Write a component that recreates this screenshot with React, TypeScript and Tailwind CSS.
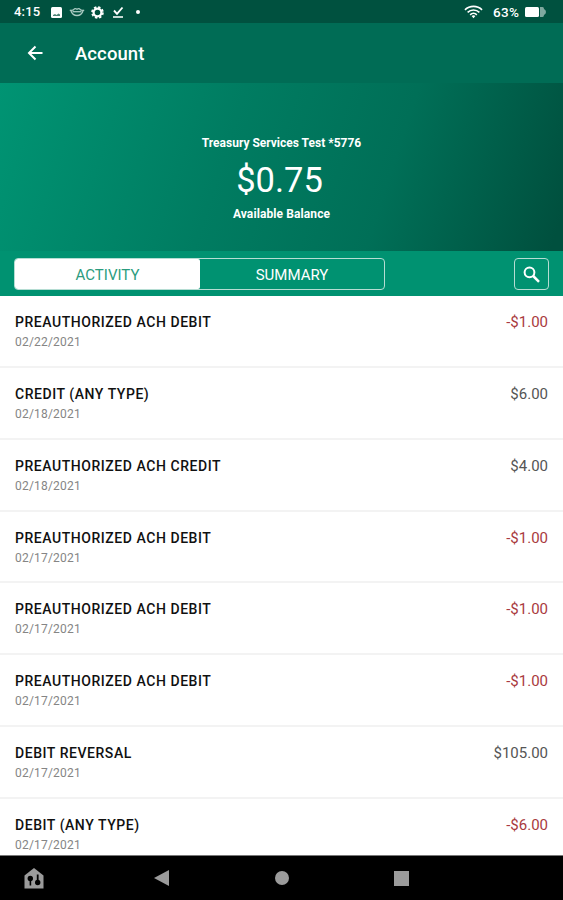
import { clsx } from "clsx";

type Transaction = {
  id: number;
  title: string;
  date: string;
  amount: string;
};

const transactions: Transaction[] = [
  { id: 1, title: "PREAUTHORIZED ACH DEBIT", date: "02/22/2021", amount: "-$1.00" },
  { id: 2, title: "CREDIT (ANY TYPE)", date: "02/18/2021", amount: "$6.00" },
  { id: 3, title: "PREAUTHORIZED ACH CREDIT", date: "02/18/2021", amount: "$4.00" },
  { id: 4, title: "PREAUTHORIZED ACH DEBIT", date: "02/17/2021", amount: "-$1.00" },
  { id: 5, title: "PREAUTHORIZED ACH DEBIT", date: "02/17/2021", amount: "-$1.00" },
  { id: 6, title: "PREAUTHORIZED ACH DEBIT", date: "02/17/2021", amount: "-$1.00" },
  { id: 7, title: "DEBIT REVERSAL", date: "02/17/2021", amount: "$105.00" },
  { id: 8, title: "DEBIT (ANY TYPE)", date: "02/17/2021", amount: "-$6.00" },
];

function StatusBar() {
  return (
    <div className="flex h-[23px] shrink-0 items-center bg-[#00513f] pt-px pr-[17px] pl-[14px] text-white">
      <span className="w-[27px] text-[13px] font-medium tracking-[0.2px] whitespace-nowrap">4:15</span>
      <svg viewBox="0 0 11 11" className="ml-[10px] size-[11px]">
        <rect width="11" height="11" rx="1.5" fill="white" />
        <path d="M2 9V8L4 7L5.500 8L7.500 6.500L9 7.500V9Z" fill="#4d8577" />
      </svg>
      <svg viewBox="0 0 16 10" className="ml-[7px] h-[10px] w-[16px]" fill="none" stroke="#a9cbc2" strokeWidth="1.3">
        <path d="M.8 3.2C3 3.800 4.500 3 5.500 1.800Q6.800 1.400 8 2.300Q9.200 1.400 10.500 1.800C11.500 3 13 3.800 15.200 3.200" />
        <path d="M2 4C3 7 5.500 8.500 8 8.500S13 7 14 4" />
        <path d="M3.500 4.700H12.500" />
      </svg>
      <svg viewBox="0 0 14 14" className="ml-[6px] size-[13px]" fill="none" stroke="white">
        <circle cx="7" cy="7" r="4.200" strokeWidth="2.400" />
        <circle cx="7" cy="7" r="5.900" strokeWidth="1.800" strokeDasharray="2.600 2.034" />
      </svg>
      <svg viewBox="0 0 12 13" className="ml-[8px] h-[13px] w-[12px]" fill="none" stroke="white">
        <path d="M2 4.500L5 7.800L10.500 1.500" strokeWidth="1.900" />
        <path d="M1 11H11" strokeWidth="1.900" stroke="#cfe0dc" />
      </svg>
      <span className="ml-[12px] size-[4px] rounded-full bg-white" />

      <svg viewBox="0 0 20 14" className="ml-auto h-[14px] w-[19px]" fill="none" stroke="white" strokeWidth="1.700">
        <path d="M1 4.700C6-.200 14-.200 19 4.700" />
        <path d="M3.800 7.400C7.300 4 12.700 4 16.200 7.400" />
        <path d="M6.500 10C8.500 8 11.500 8 13.500 10" />
        <path d="M8 11.200Q10 9.500 12 11.200L10 13.500Z" fill="white" stroke="none" />
      </svg>
      <span className="ml-[10px] w-[28px] text-[13.500px] font-medium tracking-[0.3px] whitespace-nowrap">63%</span>
      <svg viewBox="0 0 21 12" className="ml-[4px] h-[12px] w-[21px]">
        <rect x="0" y="1" width="14" height="10" rx="1.500" fill="white" />
        <path d="M15 1H17.500Q19 1 19 3Q21 4 21 6T19 9Q19 11 17.500 11H15Z" fill="#7fa89f" />
      </svg>
    </div>
  );
}

function AppBar() {
  return (
    <header className="flex h-[60px] shrink-0 items-center bg-[#006c55] pl-[27px] text-white">
      <button type="button" aria-label="Back">
        <svg viewBox="0 0 16 16" className="size-[16px]" fill="none" stroke="currentColor" strokeWidth="2">
          <path d="M15.500 8H2.500M8.500 1.500L2 8L8.500 14.500" />
        </svg>
      </button>
      <h1 className="ml-[32px] pt-[3px] text-[18.5px] font-medium tracking-[0.1px]">Account</h1>
    </header>
  );
}

function Balance() {
  return (
    <section className="flex h-[168px] shrink-0 flex-col items-center bg-[linear-gradient(108deg,#009473_0%,#007c61_40%,#006f57_68%,#00503e_98%)] pt-[52px] text-white">
      <p className="text-[12px] leading-[16px] font-bold">Treasury Services Test *5776</p>
      <p className="mt-[9px] mr-[4px] text-[34.5px] leading-[40px]">$0.75</p>
      <p className="mt-[6px] text-[12px] leading-[16px] font-bold tracking-[0.1px]">Available Balance</p>
    </section>
  );
}

function Tabs() {
  return (
    <div className="flex h-[45px] shrink-0 items-center justify-between bg-[#009271] pt-px pr-[14px] pl-[14px] text-white">
      <div className="flex h-[32px] w-[371px] overflow-hidden rounded-[4px] border border-[#b5ddd3] text-[15px]">
        <button type="button" className="w-[185px] rounded-r-[2px] bg-white pt-[2px] text-[#2b9c7e]">
          ACTIVITY
        </button>
        <button type="button" className="flex-1 pt-[2px]">
          SUMMARY
        </button>
      </div>
      <button
        type="button"
        aria-label="Search"
        className="flex h-[32px] w-[35px] items-center justify-center rounded-[4px] border border-[#b5ddd3]"
      >
        <svg viewBox="0 0 17 17" className="size-[17px]" fill="none" stroke="currentColor">
          <circle cx="6.500" cy="6.300" r="4.900" strokeWidth="2" />
          <path d="M10.200 10L16 15.800" strokeWidth="2.500" />
        </svg>
      </button>
    </div>
  );
}

function TransactionRow({ item }: { item: Transaction }) {
  return (
    <li className="flex h-[71.75px] shrink-0 justify-between border-b-2 border-[#f3f3f3] px-[15px] pt-[16px]">
      <div>
        <p className="text-[14px] leading-[20px] font-medium tracking-[0.55px] text-[#111]">{item.title}</p>
        <p className="text-[12px] leading-[20px] tracking-[0.2px] text-[#858585]">{item.date}</p>
      </div>
      <p
        className={clsx(
          "text-[15px] leading-[20px]",
          item.amount.startsWith("-") ? "text-[#a93a40]" : "text-[#555]",
        )}
      >
        {item.amount}
      </p>
    </li>
  );
}

function NavBar() {
  return (
    <nav className="flex h-[45px] shrink-0 items-center border-t border-[#777] bg-black pl-[24px] text-[#9b9b9b]">
      <svg viewBox="0 0 20 21" className="h-[21px] w-[20px]" fill="currentColor">
        <path d="M10 0L19.500 7.500V20.500H.500V7.500Z" />
        <g fill="black">
          <circle cx="6.300" cy="10.500" r="2.700" />
          <path d="M5.600 12H7.200V17.500H5.600Z" />
          <path d="M12.800 6.500H14.600V14H12.800Z" />
          <circle cx="13.700" cy="14.500" r="2.700" />
        </g>
      </svg>
      <svg viewBox="0 0 15 16" className="ml-[110px] h-[16px] w-[15px]" fill="currentColor">
        <path d="M0 8L15 0V16Z" />
      </svg>
      <span className="ml-[106px] size-[14px] rounded-full bg-current" />
      <span className="ml-[105px] size-[15px] bg-current" />
    </nav>
  );
}

export default function App() {
  return (
    <div className="flex h-[900px] w-[563px] flex-col overflow-hidden bg-white font-[Roboto,sans-serif]">
      <StatusBar />
      <AppBar />
      <Balance />
      <Tabs />
      <ul className="flex min-h-0 flex-1 flex-col overflow-hidden pt-[0.4px]">
        {transactions.map((item) => (
          <TransactionRow key={item.id} item={item} />
        ))}
      </ul>
      <NavBar />
    </div>
  );
}
